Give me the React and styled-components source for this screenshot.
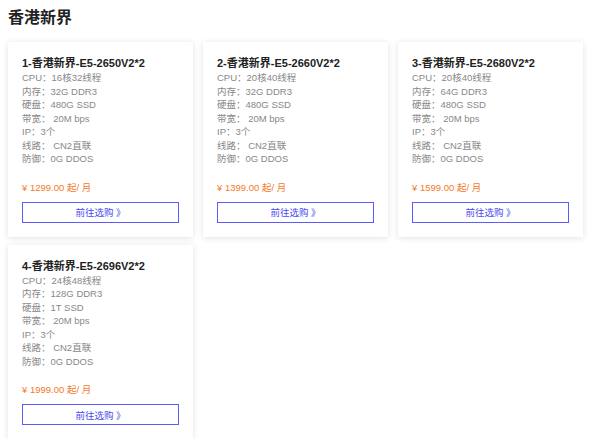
import styled, { createGlobalStyle } from 'styled-components';

const Global = createGlobalStyle`
  body { margin: 0; background: #fff; font-family: "Liberation Sans", "Noto Sans CJK SC", sans-serif; }
`;

const plans = [
  { name: '1-香港新界-E5-2650V2*2', cpu: '16核32线程', ram: '32G DDR3', disk: '480G SSD', price: '1299.00' },
  { name: '2-香港新界-E5-2660V2*2', cpu: '20核40线程', ram: '32G DDR3', disk: '480G SSD', price: '1399.00' },
  { name: '3-香港新界-E5-2680V2*2', cpu: '20核40线程', ram: '64G DDR3', disk: '480G SSD', price: '1599.00' },
  { name: '4-香港新界-E5-2696V2*2', cpu: '24核48线程', ram: '128G DDR3', disk: '1T SSD', price: '1999.00' },
];

const App = () => (
  <Page>
    <Global />
    <Title>香港新界</Title>
    <Grid>
      {plans.map(p => (
        <Card key={p.name}>
          <CardTitle>{p.name}</CardTitle>
          <Spec>CPU：{p.cpu}</Spec>
          <Spec>内存：{p.ram}</Spec>
          <Spec>硬盘：{p.disk}</Spec>
          <Spec>带宽： 20M bps</Spec>
          <Spec>IP：3个</Spec>
          <Spec>线路： CN2直联</Spec>
          <Spec>防御：0G DDOS</Spec>
          <Price>¥ {p.price} 起/ 月</Price>
          <BuyButton>前往选购 》</BuyButton>
        </Card>
      ))}
    </Grid>
  </Page>
);

export default App;

const Page = styled.div`
  padding: 8px 8px 0;
`;

const Title = styled.h1`
  margin: 0 0 14px;
  font-size: 16px;
  font-weight: bold;
  color: #222;
  line-height: 20px;
`;

const Grid = styled.div`
  display: grid;
  grid-template-columns: repeat(3, 185px);
  gap: 8px 10px;
`;

const Card = styled.div`
  background: #fff;
  box-shadow: 0 1px 6px rgba(0, 0, 0, 0.12);
  padding: 14px 14px 14px;
  display: flex;
  flex-direction: column;
`;

const CardTitle = styled.div`
  font-size: 11px;
  font-weight: bold;
  color: #222;
  line-height: 14px;
  margin: 0 0 1px;
`;

const Spec = styled.div`
  font-size: 9.5px;
  color: #888;
  line-height: 13.5px;
`;

const Price = styled.div`
  font-size: 9.5px;
  color: #f5792a;
  line-height: 12px;
  margin: 16px 0 8px;
`;

const BuyButton = styled.button`
  height: 21px;
  border: 1px solid #5a5aff;
  background: #fff;
  color: #4a4aee;
  font-family: inherit;
  font-size: 9.5px;
  cursor: pointer;
`;
